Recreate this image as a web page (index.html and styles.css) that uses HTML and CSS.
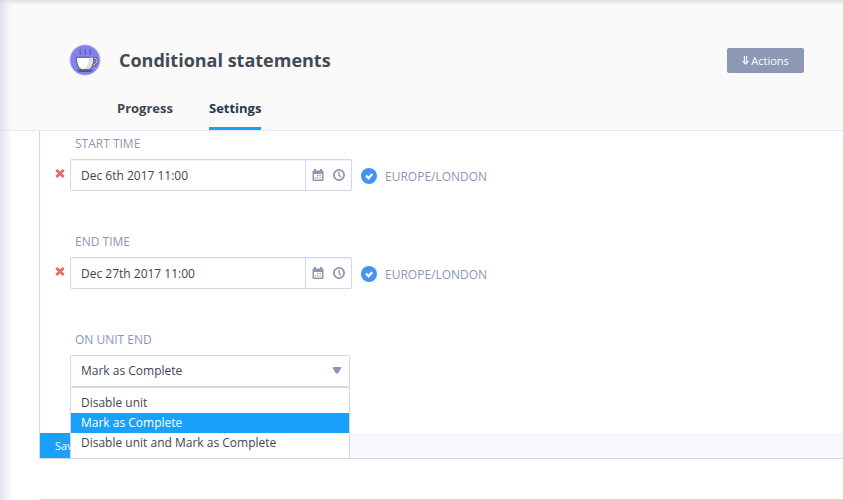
FILE: index.html
```html
<!DOCTYPE html>
<html lang="en">
<head>
<meta charset="utf-8">
<title>Conditional statements</title>
<link rel="stylesheet" href="styles.css">
</head>
<body>
<svg class="sprite" aria-hidden="true">
  <symbol id="cross" viewBox="0 0 10 9"><path d="M1.300 1 8.700 8M8.700 1 1.300 8" stroke="#e76a6d" stroke-width="2.900"/></symbol>
  <symbol id="calendar" viewBox="0 0 12 12"><path fill="#8c98b4" fill-rule="evenodd" d="M2 0h2v1.500h4V0h2v1.500h.5q1 0 1 1V11q0 1-1 1h-9q-1 0-1-1V2.500q0-1 1-1H2zM2 5v5.500h8V5z"/><path fill="#8c98b4" d="M5 6h1.300v1.300H5zM7.500 6h1.300v1.300H7.500zM2.800 8.200h1.300v1.300H2.800zM5 8.200h1.300v1.300H5zM7.500 8.200h1.300v1.300H7.500z"/></symbol>
  <symbol id="clock" viewBox="0 0 12 12"><circle cx="6" cy="6" r="5.100" fill="none" stroke="#8c98b4" stroke-width="1.800"/><path d="M6 2.700V6l1.900 2.200" fill="none" stroke="#8c98b4" stroke-width="1.400"/></symbol>
  <symbol id="check" viewBox="0 0 16 16"><circle cx="8" cy="8" r="8" fill="#4392f1"/><path d="m5 7.500 2.500 2.700 3.800-4.300" fill="none" stroke="#fff" stroke-width="2.300"/></symbol>
</svg>
<div class="page">
  <header class="header">
    <div class="title-row">
      <svg class="logo" viewBox="0 0 32 32">
        <circle cx="16" cy="16" r="15.500" fill="#c9cbe6"/>
        <circle cx="16" cy="16" r="14.700" fill="#8283ef"/>
        <path d="M12 5q-2.200 1.500-.9 3t-.3 3M17 5q-2.200 1.500-.9 3t-.3 3M22 5q-2.200 1.500-.9 3t-.3 3" fill="none" stroke="#4c5279" stroke-width="1"/>
        <path d="M24 15c3-1.500 4.700 0 4 2.300-.7 2.500-2.800 3.800-5.500 4.500" fill="none" stroke="#50566f" stroke-width="2.600"/>
        <path d="M24 15c3-1.500 4.700 0 4 2.300-.7 2.500-2.800 3.800-5.500 4.500" fill="none" stroke="#eee" stroke-width="1"/>
        <path d="M7.500 13.300h17.200c0 6.500-1.500 10.200-5.200 12.500h-7C9 23.500 7.500 19.800 7.500 13.300z" fill="#fff" stroke="#50566f" stroke-width="1"/>
        <path d="M20 13.800h4.200c-.2 6-1.500 9.300-4.800 11.300h-4c3.300-3 4.600-6.800 4.600-11.300z" fill="#dedee2"/>
        <path d="M8.500 26h15L22 27.500H10z" fill="#666b83" stroke="#50566f" stroke-width="1"/>
      </svg>
      <h1>Conditional statements</h1>
      <button class="actions"><svg class="arrow" viewBox="0 0 7 9"><path d="M2.400 0v7M4.600 0v7M.5 5l3 3.200 3-3.200" fill="none" stroke="#fff" stroke-width="1.050"/></svg>Actions</button>
    </div>
    <nav class="tabs"><a class="tab">Progress</a><a class="tab active">Settings</a></nav>
  </header>
  <main>
    <section class="panel">
      <div class="field">
        <label>START TIME</label>
        <div class="row"><svg class="cross"><use href="#cross"/></svg>
          <div class="date"><span class="value">Dec 6th 2017 11:00</span><span class="tools"><svg><use href="#calendar"/></svg><svg><use href="#clock"/></svg></span></div>
          <svg class="check"><use href="#check"/></svg><span class="zone">EUROPE/LONDON</span></div>
      </div>
      <div class="field">
        <label>END TIME</label>
        <div class="row"><svg class="cross"><use href="#cross"/></svg>
          <div class="date"><span class="value">Dec 27th 2017 11:00</span><span class="tools"><svg><use href="#calendar"/></svg><svg><use href="#clock"/></svg></span></div>
          <svg class="check"><use href="#check"/></svg><span class="zone">EUROPE/LONDON</span></div>
      </div>
      <div class="field last">
        <label>ON UNIT END</label>
        <div class="select"><span>Mark as Complete</span><svg class="caret" viewBox="0 0 10 7"><path d="M1 .500h8L6 6H4z" fill="#8c98b4" stroke="#8c98b4" stroke-linejoin="round"/></svg>
          <ul class="menu"><li>Disable unit</li><li class="selected">Mark as Complete</li><li>Disable unit and Mark as Complete</li></ul>
        </div>
      </div>
      <footer><button class="save">Save</button></footer>
    </section>
    <section class="next"></section>
  </main>
</div>
</body>
</html>
```
FILE: styles.css
```css
* { box-sizing: border-box; }
body { margin: 0; background: #fff; color: #3f4651; font: 12px/20px "Open Sans", sans-serif; }
.sprite { display: none; }
svg { display: block; flex: none; }
button { border: 0; padding: 0; font: inherit; color: #fff; }
.page { position: relative; height: 500px; overflow: hidden; }
.page::before { content: ""; position: absolute; z-index: 5; left: 0; top: 0; width: 14px; height: 100%; background: linear-gradient(90deg, rgba(205,210,228,.65), rgba(218,222,237,.5) 35%, rgba(240,242,248,.25) 75%, transparent); }
.page::after { content: ""; position: absolute; left: 0; top: 0; width: 100%; height: 5px; background: linear-gradient(rgba(0,0,0,.11), transparent); }
.header { height: 131px; padding-top: 43px; background: #fafafa; border-bottom: 1px solid #e6e7f0; }
.title-row { display: flex; align-items: center; height: 34px; padding: 0 39px 0 69px; }
.logo { width: 32px; height: 32px; }
h1 { margin: 0 auto 0 18px; font-size: 18px; line-height: 26px; font-weight: 700; color: #424a55; }
.actions { display: flex; align-items: center; justify-content: center; gap: 2px; width: 77px; height: 25px; margin-top: 1px; border-radius: 2px; background: #8c98b4; font-size: 11px; }
.arrow { width: 7px; height: 9px; }
.tabs { display: flex; gap: 36px; height: 53px; padding-left: 117px; font-size: 13px; font-weight: 700; }
.tab { padding-top: 21px; height: 53px; }
.active { color: #28364c; border-bottom: 3px solid #18a0fb; }
main { height: 369px; padding-left: 39px; }
.panel { height: 328px; border-left: 1px solid #d5d7e6; border-bottom: 1px solid #d5d7e6; padding: 3px 0 0 15px; }
.field { height: 98px; }
label { display: block; margin-left: 20px; height: 24px; color: #8c98b4; }
.row { display: flex; align-items: center; height: 34px; }
.cross { width: 10px; height: 9px; margin: -3px 5px 0 0; }
.date { display: flex; width: 282px; height: 32px; border: 1px solid #d5d7e6; border-radius: 2px; box-shadow: inset 0 1px 1px #f0f2f8; }
.value { width: 235px; padding: 6px 0 0 10px; border-right: 1px solid #d5d7e6; }
.tools { display: flex; align-items: center; gap: 9px; padding-left: 6px; }
.tools svg { width: 12px; height: 12px; }
.check { width: 16px; height: 16px; margin: 2px 8px 0 9px; }
.zone { margin-top: 3px; color: #8c98b4; }
.last { height: 103px; }
.select { position: relative; display: flex; justify-content: space-between; width: 280px; height: 32px; margin: 1px 0 0 15px; padding: 5px 7px 0 10px; border: 1px solid #d5d7e6; border-radius: 2px; }
.caret { width: 10px; height: 7px; margin-top: 6px; }
.menu { position: absolute; z-index: 2; top: 31px; left: -1px; width: 280px; height: 71px; margin: 0; padding: 5px 0 0; background: #fff; border: 1px solid #d5d7e6; border-bottom: 0; list-style: none; }
.menu li { height: 20px; padding-left: 10px; }
.menu .selected { background: #18a0fb; color: #fff; }
footer { margin-left: -15px; height: 25px; background: #f6f8fd; }
.save { width: 54px; height: 25px; background: #18a0fb; font-size: 11px; }
.next { height: 1px; margin: 40px 0 0 1px; background: #d5d7e6; }
```
